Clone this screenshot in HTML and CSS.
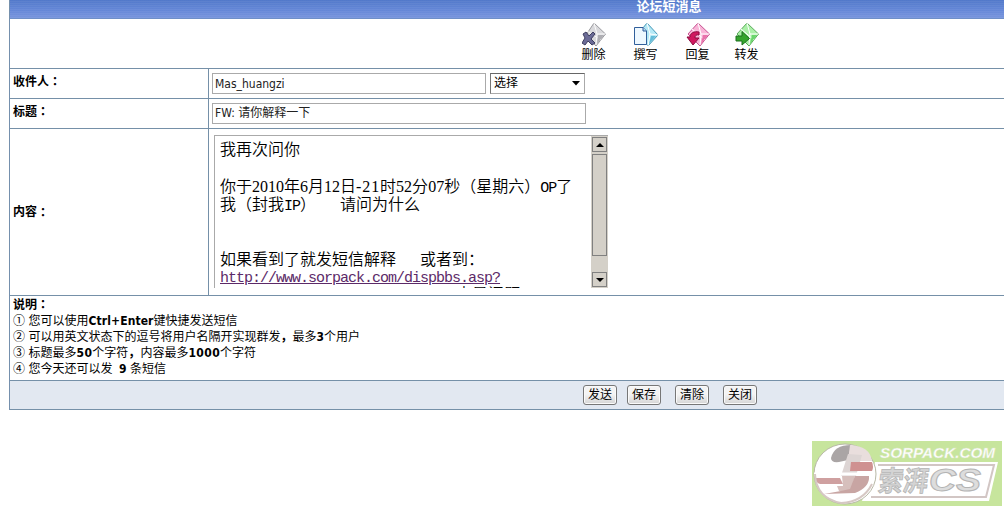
FILE: index.html
```html
<!DOCTYPE html>
<html lang="zh-CN">
<head>
<meta charset="utf-8">
<title>论坛短消息</title>
<link rel="stylesheet" href="styles.css">
</head>
<body>
<main class="panel">
  <h1 class="title">论坛短消息</h1>
  <nav class="tools">
    <a class="tool">
      <svg width="24" height="26" viewBox="0 0 24 26"><path d="M12 1 23.500 12 14 24 4 13Z" fill="#d9d9dc" stroke="#99999e"/><path d="M12 1 15 12H23M5 9 19 18M15 12 14 23" fill="none" stroke="#fafafa"/><path d="M16 13H22L15 22Z" fill="#aeaeb3"/><path d="m1 12 3-2 3 4 4-4 2 2-4 5 4 4-3 2-4-4-3 4-3-2 3-5Z" fill="#6b6b96" stroke="#3e3e60"/></svg>
      <span>删除</span>
    </a>
    <a class="tool write">
      <svg width="26" height="26" viewBox="0 0 26 26"><path d="M14 1 25 13 15 24 5 12Z" fill="#b5e9f6" stroke="#4599b8"/><path d="M14 1 17 12 25 13M17 12 15 24" fill="none" stroke="#fff"/><path d="M18 14H23L16 22Z" fill="#64bdd9"/><path d="M1.500 5.500H10L13.500 9V22.500H1.500Z" fill="#eef8ff" stroke="#315f9b"/><path d="M10 5.500V9H13.500" fill="#bcdaf3" stroke="#315f9b"/></svg>
      <span>撰写</span>
    </a>
    <a class="tool reply">
      <svg width="24" height="26" viewBox="0 0 24 26"><path d="M12 1 23.500 12 14 24 2 12Z" fill="#f9b4d7" stroke="#c65391"/><path d="M12 1 15 12H23M6 7 19 18M15 12 14 23" fill="none" stroke="#fff"/><path d="M17 13H22L15 22Z" fill="#e973ab"/><path d="M13 10C8 9 4 11 4 15H1l6 8 6-7H9q0-4 4-3Z" fill="#d0175f" stroke="#8d0c40"/></svg>
      <span>回复</span>
    </a>
    <a class="tool">
      <svg width="24" height="26" viewBox="0 0 24 26"><path d="M12 1 23.500 12 14 24 2 12Z" fill="#aaf0a7" stroke="#5bab5b"/><path d="M12 1 15 12H23M6 7 19 18M15 12 14 23" fill="none" stroke="#fff"/><path d="M17 13H22L15 22Z" fill="#69d66c"/><path d="M1 14H7V9.500L14.500 16.500 7 23V19H1Z" fill="#35a52d" stroke="#1c701e"/></svg>
      <span>转发</span>
    </a>
  </nav>
  <section class="row">
    <div class="label">收件人<span class="colon" lang="zh-TW">：</span></div>
    <div class="field">
      <div class="input to">Mas_huangzi</div>
      <div class="select">选择<svg width="8" height="5" viewBox="0 0 8 5"><path d="M0 0H8L4 4.500Z"/></svg></div>
    </div>
  </section>
  <section class="row">
    <div class="label">标题<span class="colon" lang="zh-TW">：</span></div>
    <div class="field"><div class="input subject">FW: 请你解释一下</div></div>
  </section>
  <section class="row body-row">
    <div class="label middle">内容<span class="colon" lang="zh-TW">：</span></div>
    <div class="field">
      <div class="editor">
        <div class="message">
          <p>我再次问你</p>
          <p></p>
          <p>你于<i>2010</i>年<i>6</i>月<i>12</i>日<i class="dash">-21</i>时<i>52</i>分<i>07</i>秒（星期六）<i class="mono">OP</i>了</p>
          <p>我（封我<i class="mono">IP</i>）<i class="mono">   </i>请问为什么</p>
          <p></p>
          <p></p>
          <p>如果看到了就发短信解释<i class="mono">   </i>或者到：</p>
          <p><a class="link">http://www.sorpack.com/dispbbs.asp?</a></p>
          <p class="cut">查是问题</p>
        </div>
        <div class="scrollbar">
          <span class="arrow"><svg width="8" height="4" viewBox="0 0 8 4"><path d="M0 4H8L4 0Z"/></svg></span>
          <span class="thumb"></span>
          <span class="arrow down"><svg width="8" height="4" viewBox="0 0 8 4"><path d="M0 0H8L4 4Z"/></svg></span>
        </div>
      </div>
    </div>
  </section>
  <section class="notes">
    <p><b>说明<span class="colon" lang="zh-TW">：</span></b></p>
    <p><span class="num">①</span>您可以使用<b class="keys">Ctrl+Enter</b>键快捷发送短信</p>
    <p><span class="num">②</span>可以用英文状态下的逗号将用户名隔开实现群发<b>，</b>最多<b>3</b>个用户</p>
    <p><span class="num">③</span>标题最多<b class="digits">50</b>个字符<b>，</b>内容最多<b class="digits">1000</b>个字符</p>
    <p><span class="num">④</span>您今天还可以发 <b class="count">9</b> 条短信</p>
  </section>
  <footer class="actions">
    <button class="btn">发送</button>
    <button class="btn">保存</button>
    <button class="btn">清除</button>
    <button class="btn">关闭</button>
  </footer>
</main>
<svg class="logo" width="190" height="65" viewBox="0 0 190 65">
  <rect width="190" height="65" fill="#c7e59d"/>
  <path d="M63 21H186L177 60H50Z" fill="#fff"/>
  <path d="M66 24H182L174 56H59" fill="none" stroke="#d2c6c4" stroke-width="2"/>
  <ellipse cx="33" cy="33" rx="31" ry="30" fill="#fff" stroke="#b8b8a6"/>
  <path d="M19 17Q22 4 39 4L36 19 27 21Q19 22 19 17Z" fill="#aaa5a5"/>
  <path d="M38 4Q58 5 60 20H36Z" fill="#e9dedd"/>
  <path d="M36 13 50 14 44 35H29Z" fill="#ddd5d4"/>
  <path d="M39 21H60Q62 26 60 30H38Z" fill="#cf9191"/>
  <path d="M2 33H60" stroke="#fff" stroke-width="3"/>
  <path d="M3 37H28L31 43H8Q4 42 3 37Z" fill="#cfa0a0"/>
  <path d="M30 35H43L39 50H27L25 45H31Z" fill="#d6bfbc"/>
  <path d="M43 35H57Q58 46 43 52L12 53Q30 50 38 48Z" fill="#c8a5a3"/>
  <path d="M3 33Q4 57 29 62 51 61 60 43" fill="none" stroke="#d6c8c4" stroke-width="2"/>
  <text class="brand" x="68" y="17" textLength="115" lengthAdjust="spacingAndGlyphs">SORPACK.COM</text>
  <text class="brand-cn" x="63" y="50" textLength="50" lengthAdjust="spacingAndGlyphs" transform="translate(9 0) skewX(-8)">索湃</text>
  <text class="brand-cs" x="117" y="50" textLength="52" lengthAdjust="spacingAndGlyphs">CS</text>
</svg>
</body>
</html>
```

FILE: styles.css
```css
* { box-sizing: border-box; }
body {
  margin: 0;
  height: 508px;
  overflow: hidden;
  background: #fff;
  color: #000;
  font: 12px/16px "DejaVu Sans Condensed", "Noto Sans CJK SC", sans-serif;
  font-stretch: condensed;
}
p { margin: 0; }
.panel {
  margin-left: 9px;
  border-left: 1px solid #7590ad;
}
.title {
  margin: 0;
  height: 19px;
  padding-left: 324px;
  border-bottom: 1px solid #6f8fc8;
  background: repeating-linear-gradient(#fff0 0 1px, #ffffff0c 1px 2px), linear-gradient(#5279ca, #6688d8 60%, #7895dd);
  color: #fff;
  font-size: 13px;
  line-height: 14px;
  text-align: center;
}
.tools {
  display: flex;
  justify-content: center;
  gap: 27px;
  height: 50px;
  padding: 3px 0 0 326px;
  border-bottom: 1px solid #7590a8;
}
.tool {
  display: flex;
  flex-direction: column;
  align-items: center;
  width: 24px;
}
.write { margin: 0 0 0 1px; }
.reply { margin: 0 -2px 0 1px; }
.tool svg { flex: none; }
.tool span { line-height: 14px; white-space: nowrap; }
.row {
  display: flex;
  height: 30px;
  border-bottom: 1px solid #7590a8;
}
.label {
  width: 199px;
  padding: 5px 3px;
  border-right: 1px solid #7590a8;
  font-weight: bold;
}
.colon { font-family: "Noto Sans CJK TC", sans-serif; line-height: 1; }
.field { display: flex; gap: 4px; padding: 4px 3px; }
.input, .select {
  height: 21px;
  padding: 0 2px;
  border: 1px solid #aaa;
  line-height: 19px;
  white-space: nowrap;
}
.input { color: #222; }
.subject { width: 374px; }
.to { width: 274px; line-height: 20px; }
.select {
  display: flex;
  align-items: center;
  justify-content: space-between;
  width: 95px;
  padding: 0 4px 0 3px;
  border-color: #666 #aaa #aaa #777;
}
.body-row { height: 167px; }
.middle { display: flex; align-items: center; }
.body-row .field { padding: 6px 5px 7px; }
.editor {
  display: flex;
  width: 394px;
  height: 153px;
  border-top: 1px solid #aaa;
  border-left: 1px solid #aaa;
  overflow: hidden;
}
.message {
  flex: 1;
  padding: 3px 0 0 5px;
  overflow: hidden;
  font: 16px/18.3px "Noto Sans CJK SC", sans-serif;
  font-weight: 350;
}
.message p { height: 18.3px; white-space: pre; }
.message i { font: 16px/16px "Liberation Serif", serif; }
.message .dash { letter-spacing: .9px; }
.message .mono, .link {
  font: 15px/16px "Liberation Mono", monospace;
  letter-spacing: -1px;
}
.link {
  position: relative;
  top: -1px;
  color: #5c2a68;
  text-decoration: underline;
}
.message .cut { padding-left: 236px; line-height: 17px; }
.scrollbar {
  display: flex;
  flex-direction: column;
  width: 17px;
  padding: 1px;
  background: #d4d0c8;
}
.arrow {
  display: flex;
  align-items: center;
  justify-content: center;
  height: 15px;
  border: 1px solid #808080;
}
.down { margin-top: auto; }
.thumb { height: 102px; margin-top: 2px; border: 1px solid #808080; }
.notes {
  height: 85px;
  padding: 1px 3px;
  border-bottom: 1px solid #7590a8;
  white-space: nowrap;
}
.num {
  display: inline-block;
  width: 15.5px;
  font-family: "Noto Sans CJK SC", sans-serif;
  line-height: 1;
}
.keys { letter-spacing: .1px; }
.digits { letter-spacing: .4px; }
.count { margin: 0 0 0 3px; }
.actions {
  display: flex;
  justify-content: center;
  gap: 14px;
  height: 29px;
  padding: 4px 0 0 326px;
  border-bottom: 1px solid #7590a8;
  background: #e2e8f1;
}
.btn {
  width: 34px;
  height: 20px;
  padding: 0;
  border: 1px solid #777;
  border-radius: 3px;
  background: linear-gradient(#f4f4f4 45%, #d5d5d5);
  box-shadow: inset 0 0 0 1px #fafafa;
  color: #000;
  font: inherit;
  line-height: 16px;
}
.btn:first-child { margin-right: -4px; }
.logo { position: absolute; left: 812px; top: 441px; }
.brand {
  font: italic bold 14px "Liberation Sans", sans-serif;
  fill: #fff;
  stroke: #d9e6c4;
  stroke-width: .4px;
}
.brand-cn {
  font: bold 28px "Noto Sans CJK SC", sans-serif;
  fill: #d4d4d4;
  stroke: #b4b4b4;
  stroke-width: .8px;
}
.brand-cs {
  font: italic bold 32px "Liberation Sans", sans-serif;
  fill: #ddd;
  stroke: #b4b4b4;
  stroke-width: 1px;
}
```
